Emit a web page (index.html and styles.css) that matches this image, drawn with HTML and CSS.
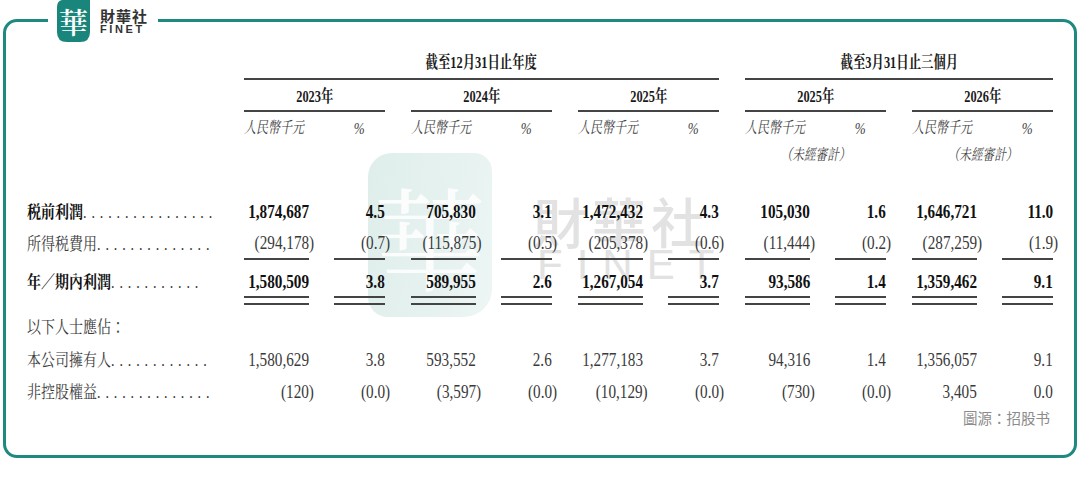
FILE: index.html
```html
<!DOCTYPE html>
<html lang="zh-Hant">
<head>
<meta charset="utf-8">
<title>FINET</title>
<link rel="stylesheet" href="styles.css">
</head>
<body>
<div class="frame">
  <div class="logo">
    <svg class="logo-mark" viewBox="0 0 33 42" width="33" height="42" aria-hidden="true">
      <path d="M5 0 H33 V32 Q33 42 23 42 H10 Q0 42 0 32 V7 Q0 1 5 0 Z" fill="#1a857b"/>
      <text x="16.5" y="21" text-anchor="middle" dominant-baseline="central" class="logo-char">華</text>
    </svg>
    <div class="logo-text">
      <div class="logo-cn">財華社</div>
      <div class="logo-en">FINET</div>
    </div>
  </div>

  <div class="wm-mark" aria-hidden="true"><span>華</span></div>
  <div class="wm-text" aria-hidden="true">
    <div class="wm-cn">財華社</div>
    <div class="wm-en">FINET</div>
  </div>

  <div class="tbl">
    <div class="row r-period">
      <div></div>
      <div class="period p3"><span class="sx s75 hd">截至12月31日止年度</span></div>
      <div class="period p2"><span class="sx s75 hd">截至3月31日止三個月</span></div>
    </div>

    <div class="row r-year">
      <div></div>
      <div class="year"><span class="sx s75 hd">2023年</span></div>
      <div class="year"><span class="sx s75 hd">2024年</span></div>
      <div class="year"><span class="sx s75 hd">2025年</span></div>
      <div class="year"><span class="sx s75 hd">2025年</span></div>
      <div class="year"><span class="sx s75 hd">2026年</span></div>
    </div>

    <div class="row r-unit">
      <div></div>
      <div class="g"><div class="c cl"><span class="sx s75 ol unit">人民幣千元</span></div><div class="c cc"><span class="sx s75 pc">%</span></div></div>
      <div class="g"><div class="c cl"><span class="sx s75 ol unit">人民幣千元</span></div><div class="c cc"><span class="sx s75 pc">%</span></div></div>
      <div class="g"><div class="c cl"><span class="sx s75 ol unit">人民幣千元</span></div><div class="c cc"><span class="sx s75 pc">%</span></div></div>
      <div class="g"><div class="c cl"><span class="sx s75 ol unit">人民幣千元</span></div><div class="c cc"><span class="sx s75 pc">%</span></div></div>
      <div class="g"><div class="c cl"><span class="sx s75 ol unit">人民幣千元</span></div><div class="c cc"><span class="sx s75 pc">%</span></div></div>
    </div>

    <div class="row r-audit">
      <div></div><div></div><div></div><div></div>
      <div class="gc"><span class="sx s75 unit">（未經審計）</span></div>
      <div class="gc"><span class="sx s75 unit">（未經審計）</span></div>
    </div>

    <div class="row r-data r-first bold">
      <div class="lab"><span class="sx ol lw"><span class="lt">税前利潤</span><span class="dots">................</span></span></div>
      <div class="g"><div class="c"><span class="sx or n">1,874,687</span></div><div class="c"><span class="sx or n">4.5</span></div></div>
      <div class="g"><div class="c"><span class="sx or n">705,830</span></div><div class="c"><span class="sx or n">3.1</span></div></div>
      <div class="g"><div class="c"><span class="sx or n">1,472,432</span></div><div class="c"><span class="sx or n">4.3</span></div></div>
      <div class="g"><div class="c"><span class="sx or n">105,030</span></div><div class="c"><span class="sx or n">1.6</span></div></div>
      <div class="g"><div class="c"><span class="sx or n">1,646,721</span></div><div class="c"><span class="sx or n">11.0</span></div></div>
    </div>

    <div class="row r-data">
      <div class="lab"><span class="sx ol lw"><span class="lt">所得税費用</span><span class="dots">..............</span></span></div>
      <div class="g"><div class="c u"><span class="sx or n">(294,178<span class="rp">)</span></span></div><div class="c u"><span class="sx or n">(0.7<span class="rp">)</span></span></div></div>
      <div class="g"><div class="c u"><span class="sx or n">(115,875<span class="rp">)</span></span></div><div class="c u"><span class="sx or n">(0.5<span class="rp">)</span></span></div></div>
      <div class="g"><div class="c u"><span class="sx or n">(205,378<span class="rp">)</span></span></div><div class="c u"><span class="sx or n">(0.6<span class="rp">)</span></span></div></div>
      <div class="g"><div class="c u"><span class="sx or n">(11,444<span class="rp">)</span></span></div><div class="c u"><span class="sx or n">(0.2<span class="rp">)</span></span></div></div>
      <div class="g"><div class="c u"><span class="sx or n">(287,259<span class="rp">)</span></span></div><div class="c u"><span class="sx or n">(1.9<span class="rp">)</span></span></div></div>
    </div>

    <div class="row r-total bold">
      <div class="lab lab-total"><span class="sx ol lw"><span class="lt">年／期內利潤</span><span class="dots">...........</span></span></div>
      <div class="g"><div class="c dbl"><span class="sx or n">1,580,509</span></div><div class="c dbl"><span class="sx or n">3.8</span></div></div>
      <div class="g"><div class="c dbl"><span class="sx or n">589,955</span></div><div class="c dbl"><span class="sx or n">2.6</span></div></div>
      <div class="g"><div class="c dbl"><span class="sx or n">1,267,054</span></div><div class="c dbl"><span class="sx or n">3.7</span></div></div>
      <div class="g"><div class="c dbl"><span class="sx or n">93,586</span></div><div class="c dbl"><span class="sx or n">1.4</span></div></div>
      <div class="g"><div class="c dbl"><span class="sx or n">1,359,462</span></div><div class="c dbl"><span class="sx or n">9.1</span></div></div>
    </div>

    <div class="row r-data r-attr">
      <div class="lab"><span class="sx ol lw"><span class="lt">以下人士應佔：</span></span></div>
    </div>

    <div class="row r-data r-owner">
      <div class="lab"><span class="sx ol lw"><span class="lt">本公司擁有人</span><span class="dots">............</span></span></div>
      <div class="g"><div class="c"><span class="sx or n">1,580,629</span></div><div class="c"><span class="sx or n">3.8</span></div></div>
      <div class="g"><div class="c"><span class="sx or n">593,552</span></div><div class="c"><span class="sx or n">2.6</span></div></div>
      <div class="g"><div class="c"><span class="sx or n">1,277,183</span></div><div class="c"><span class="sx or n">3.7</span></div></div>
      <div class="g"><div class="c"><span class="sx or n">94,316</span></div><div class="c"><span class="sx or n">1.4</span></div></div>
      <div class="g"><div class="c"><span class="sx or n">1,356,057</span></div><div class="c"><span class="sx or n">9.1</span></div></div>
    </div>

    <div class="row r-data">
      <div class="lab"><span class="sx ol lw"><span class="lt">非控股權益</span><span class="dots">..............</span></span></div>
      <div class="g"><div class="c"><span class="sx or n">(120<span class="rp">)</span></span></div><div class="c"><span class="sx or n">(0.0<span class="rp">)</span></span></div></div>
      <div class="g"><div class="c"><span class="sx or n">(3,597<span class="rp">)</span></span></div><div class="c"><span class="sx or n">(0.0<span class="rp">)</span></span></div></div>
      <div class="g"><div class="c"><span class="sx or n">(10,129<span class="rp">)</span></span></div><div class="c"><span class="sx or n">(0.0<span class="rp">)</span></span></div></div>
      <div class="g"><div class="c"><span class="sx or n">(730<span class="rp">)</span></span></div><div class="c"><span class="sx or n">(0.0<span class="rp">)</span></span></div></div>
      <div class="g"><div class="c"><span class="sx or n">3,405</span></div><div class="c"><span class="sx or n">0.0</span></div></div>
    </div>

    <div class="src">圖源：招股书</div>
  </div>
</div>
</body>
</html>
```

FILE: styles.css
```css
* {
  box-sizing: border-box;
  margin: 0;
  padding: 0;
}

html, body {
  background: #fff;
}

body {
  width: 1080px;
  height: 478px;
  overflow: hidden;
  padding: 19px 3px 0 3px;
  font-family: "Liberation Serif", "Noto Serif CJK TC", "Noto Sans CJK TC", serif;
  color: #3a3a3a;
}

.frame {
  position: relative;
  height: 439px;
  border: 3px solid #1d897f;
  border-radius: 14px;
  padding: 26px 0 0 21px;
}

/* ---------- logo ---------- */
.logo {
  position: absolute;
  top: -22px;
  left: 42px;
  z-index: 3;
  height: 42px;
  display: flex;
  align-items: flex-start;
  gap: 10px;
  padding: 0 10px 0 9px;
  background: #fff;
}

.logo-mark {
  display: block;
}

.logo-char {
  font-family: "Noto Serif CJK TC", "Noto Sans CJK TC", serif;
  font-size: 29px;
  font-weight: 600;
  fill: #fff;
}

.logo-text {
  padding-top: 9px;
  color: #333;
}

.logo-cn {
  font-family: "Noto Sans CJK TC", sans-serif;
  font-weight: 700;
  font-size: 15px;
  line-height: 14px;
  letter-spacing: 1px;
}

.logo-en {
  font-family: "Liberation Sans", sans-serif;
  font-weight: 700;
  font-size: 11px;
  line-height: 10px;
  letter-spacing: 2.6px;
  margin-top: 1px;
}

/* ---------- watermark ---------- */
.wm-mark {
  position: absolute;
  left: 362px;
  top: 131px;
  width: 124px;
  height: 164px;
  z-index: 0;
  background: linear-gradient(100deg, #dfeeeb 0%, #e6f2f0 60%, #edf6f4 100%);
  border-radius: 24px 18px 28px 20px;
  display: flex;
  align-items: center;
  justify-content: center;
  overflow: hidden;
}

.wm-mark span {
  font-family: "Noto Serif CJK TC", "Noto Sans CJK TC", serif;
  font-size: 112px;
  font-weight: 400;
  line-height: 1;
  color: #fbfdfd;
}

.wm-text {
  position: absolute;
  left: 527px;
  top: 172px;
  z-index: 0;
  color: #e2e2e2;
}

.wm-cn {
  font-family: "Noto Sans CJK TC", sans-serif;
  font-weight: 500;
  font-size: 54px;
  line-height: 54px;
  letter-spacing: 5px;
}

.wm-en {
  font-family: "Liberation Sans", sans-serif;
  font-size: 42px;
  line-height: 42px;
  letter-spacing: 14px;
  margin-top: -4px;
  padding-left: 4px;
}

/* ---------- table ---------- */
.tbl {
  position: relative;
  z-index: 1;
  width: 1026px;
}

.row {
  display: grid;
  grid-template-columns: 191px repeat(5, 141px);
  column-gap: 26px;
}

.sx {
  display: inline-block;
  white-space: nowrap;
  transform: scaleX(0.8);
  transform-origin: 50% 50%;
}

.s75 {
  transform: scaleX(0.75);
}

.ol {
  transform-origin: 0 50%;
}

.or {
  transform-origin: 100% 50%;
}

.hd {
  font-weight: 700;
  font-size: 16.5px;
  line-height: 20px;
  color: #1a1a1a;
}

.r-period {
  height: 32px;
}

.period {
  display: flex;
  align-items: center;
  justify-content: center;
  border-bottom: 2px solid #444;
}

.p3 {
  grid-column: span 3;
}

.p2 {
  grid-column: span 2;
}

.r-year {
  height: 32px;
}

.year {
  display: flex;
  align-items: center;
  justify-content: center;
  padding-top: 3px;
  border-bottom: 2px solid #444;
}

.r-unit {
  height: 32px;
}

.g {
  display: grid;
  grid-template-columns: 65px 51px;
  justify-content: space-between;
}

.c {
  display: flex;
  align-items: center;
  justify-content: flex-end;
}

.cl {
  justify-content: flex-start;
}

.cc {
  justify-content: center;
}

.unit {
  font-style: italic;
  font-size: 16px;
  line-height: 20px;
  color: #444;
}

.r-audit .unit {
  font-size: 15.5px;
}

.pc {
  font-style: italic;
  font-size: 17.5px;
  line-height: 20px;
  color: #444;
}

.r-audit {
  height: 22px;
}

.gc {
  display: flex;
  align-items: center;
  justify-content: center;
}

/* data rows */
.r-data {
  height: 32px;
}

.r-first {
  margin-top: 30px;
}

.lab {
  display: flex;
  align-items: center;
}

.lw {
  display: inline-flex;
  align-items: baseline;
  justify-content: space-between;
  width: 244px;
  font-size: 17.5px;
  line-height: 22px;
}

.lt {
  flex: none;
}

.dots {
  flex: none;
  font-family: "Liberation Serif", serif;
  font-weight: 400;
  letter-spacing: 6.1px;
  color: #333;
}

.n {
  font-size: 19px;
  line-height: 22px;
}

.rp {
  margin-right: -6.33px;
}

.bold {
  color: #111;
}

.bold .lt,
.bold .n {
  font-weight: 700;
}

.u {
  border-bottom: 2px solid #444;
}

.r-total {
  height: 45px;
}

.lab-total {
  padding: 8px 0 9px;
}

.dbl {
  padding: 8px 0 7px;
  border-bottom: 2px solid #444;
  background: linear-gradient(#444, #444) left 0 bottom 5px / 100% 2px no-repeat;
}

.r-attr {
  margin-top: 6px;
}

.r-owner {
  margin-top: 1px;
}

.src {
  font-family: "Noto Sans CJK SC", sans-serif;
  font-size: 14.5px;
  line-height: 20px;
  color: #8c8c8c;
  text-align: right;
  padding-right: 3px;
}
```
